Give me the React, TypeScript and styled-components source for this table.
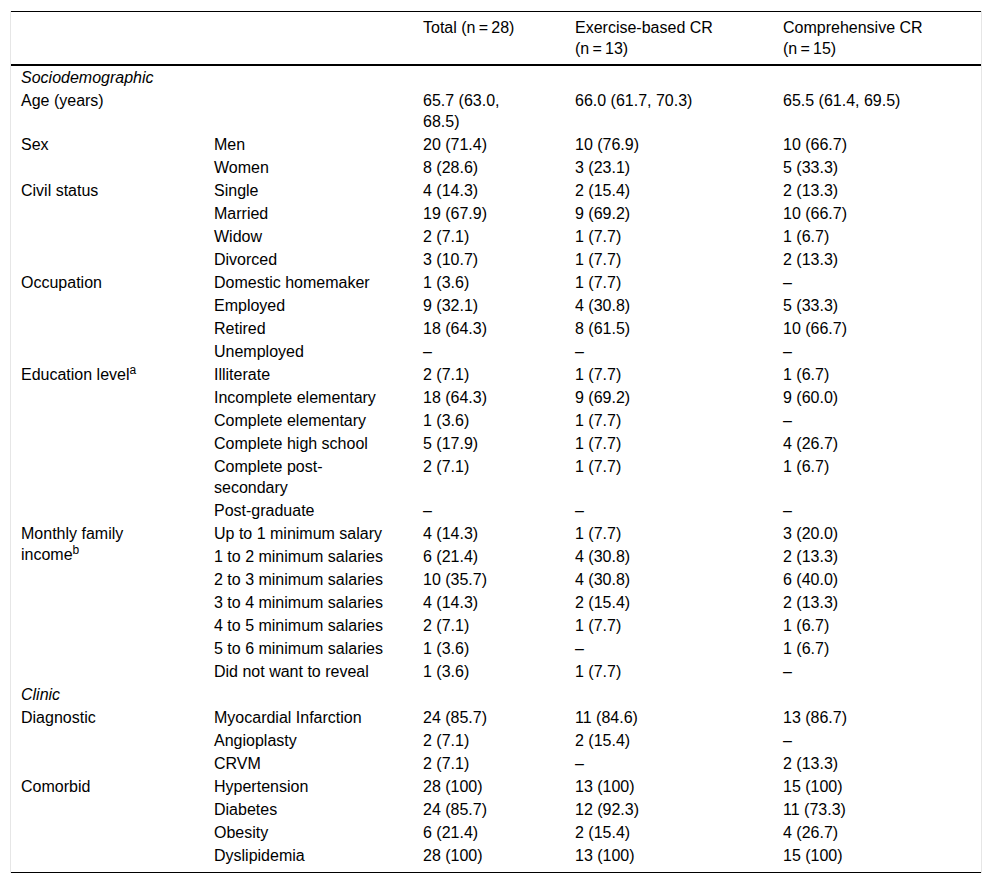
import styled, { createGlobalStyle } from 'styled-components';

const GlobalStyle = createGlobalStyle`
    body {
        margin: 0;
        background: #ffffff;
        font-family: "Liberation Sans", Arial, sans-serif;
        color: #000000;
    }
`
const TableFrame = styled.div`
    margin: 11px 0 0 10px;
    width: 970px;
    border-left: 1px solid #e6e6e6;
    border-right: 1px solid #e6e6e6;
`
const DataTable = styled.table`
    width: 970px;
    table-layout: fixed;
    border-collapse: collapse;
    font-size: 16px;
    line-height: 21px;
    border-top: 1px solid #000;
    border-bottom: 1px solid #000;
`
const HeadCell = styled.th`
    text-align: left;
    font-weight: 400;
    vertical-align: top;
    padding: 5px 28px 5px 10px;
    border-bottom: 2px solid #000;
`
const Cell = styled.td<{ $last?: boolean }>`
    vertical-align: top;
    padding: 1px 28px ${p => (p.$last ? '6px' : '1px')} 10px;
`
const SectionCell = styled.td`
    font-style: italic;
    padding: 1px 10px;
`
const Sup = styled.sup`
    font-size: 12px;
    line-height: 0;
    vertical-align: 6px;
`
const NoWrap = styled.span`
    white-space: nowrap;
`

type Item = [string, string, string, string]
type Group = { label: string; note?: string; items: Item[] }

const sections: { title: string; groups: Group[] }[] = [
    {
        title: 'Sociodemographic',
        groups: [
            { label: 'Age (years)', items: [['', '65.7 (63.0, 68.5)', '66.0 (61.7, 70.3)', '65.5 (61.4, 69.5)']] },
            {
                label: 'Sex',
                items: [
                    ['Men', '20 (71.4)', '10 (76.9)', '10 (66.7)'],
                    ['Women', '8 (28.6)', '3 (23.1)', '5 (33.3)'],
                ],
            },
            {
                label: 'Civil status',
                items: [
                    ['Single', '4 (14.3)', '2 (15.4)', '2 (13.3)'],
                    ['Married', '19 (67.9)', '9 (69.2)', '10 (66.7)'],
                    ['Widow', '2 (7.1)', '1 (7.7)', '1 (6.7)'],
                    ['Divorced', '3 (10.7)', '1 (7.7)', '2 (13.3)'],
                ],
            },
            {
                label: 'Occupation',
                items: [
                    ['Domestic homemaker', '1 (3.6)', '1 (7.7)', '–'],
                    ['Employed', '9 (32.1)', '4 (30.8)', '5 (33.3)'],
                    ['Retired', '18 (64.3)', '8 (61.5)', '10 (66.7)'],
                    ['Unemployed', '–', '–', '–'],
                ],
            },
            {
                label: 'Education level',
                note: 'a',
                items: [
                    ['Illiterate', '2 (7.1)', '1 (7.7)', '1 (6.7)'],
                    ['Incomplete elementary', '18 (64.3)', '9 (69.2)', '9 (60.0)'],
                    ['Complete elementary', '1 (3.6)', '1 (7.7)', '–'],
                    ['Complete high school', '5 (17.9)', '1 (7.7)', '4 (26.7)'],
                    ['Complete post-secondary', '2 (7.1)', '1 (7.7)', '1 (6.7)'],
                    ['Post-graduate', '–', '–', '–'],
                ],
            },
            {
                label: 'Monthly family income',
                note: 'b',
                items: [
                    ['Up to 1 minimum salary', '4 (14.3)', '1 (7.7)', '3 (20.0)'],
                    ['1 to 2 minimum salaries', '6 (21.4)', '4 (30.8)', '2 (13.3)'],
                    ['2 to 3 minimum salaries', '10 (35.7)', '4 (30.8)', '6 (40.0)'],
                    ['3 to 4 minimum salaries', '4 (14.3)', '2 (15.4)', '2 (13.3)'],
                    ['4 to 5 minimum salaries', '2 (7.1)', '1 (7.7)', '1 (6.7)'],
                    ['5 to 6 minimum salaries', '1 (3.6)', '–', '1 (6.7)'],
                    ['Did not want to reveal', '1 (3.6)', '1 (7.7)', '–'],
                ],
            },
        ],
    },
    {
        title: 'Clinic',
        groups: [
            {
                label: 'Diagnostic',
                items: [
                    ['Myocardial Infarction', '24 (85.7)', '11 (84.6)', '13 (86.7)'],
                    ['Angioplasty', '2 (7.1)', '2 (15.4)', '–'],
                    ['CRVM', '2 (7.1)', '–', '2 (13.3)'],
                ],
            },
            {
                label: 'Comorbid',
                items: [
                    ['Hypertension', '28 (100)', '13 (100)', '15 (100)'],
                    ['Diabetes', '24 (85.7)', '12 (92.3)', '11 (73.3)'],
                    ['Obesity', '6 (21.4)', '2 (15.4)', '4 (26.7)'],
                    ['Dyslipidemia', '28 (100)', '13 (100)', '15 (100)'],
                ],
            },
        ],
    },
]

const Count = ({ n }: { n: number }) => <NoWrap>(n{'\u2009'}={'\u2009'}{n})</NoWrap>

const App = () => {
    return (
        <>
            <GlobalStyle />
            <TableFrame>
                <DataTable>
                    <colgroup>
                        <col style={{ width: 193 }} />
                        <col style={{ width: 209 }} />
                        <col style={{ width: 152 }} />
                        <col style={{ width: 208 }} />
                        <col style={{ width: 208 }} />
                    </colgroup>
                    <thead>
                        <tr>
                            <HeadCell />
                            <HeadCell />
                            <HeadCell>Total <Count n={28} /></HeadCell>
                            <HeadCell>Exercise-based CR <Count n={13} /></HeadCell>
                            <HeadCell>Comprehensive CR <Count n={15} /></HeadCell>
                        </tr>
                    </thead>
                    {sections.map((section, si) => (
                        <tbody key={section.title}>
                            <tr>
                                <SectionCell colSpan={5}>{section.title}</SectionCell>
                            </tr>
                            {section.groups.map((group, gi) =>
                                group.items.map((item, ii) => {
                                    const last =
                                        si === sections.length - 1 &&
                                        gi === section.groups.length - 1 &&
                                        ii === group.items.length - 1
                                    return (
                                        <tr key={group.label + ii}>
                                            {ii === 0 && (
                                                <Cell rowSpan={group.items.length} $last={group.items.length === 1 && last}>
                                                    {group.label}
                                                    {group.note && <Sup>{group.note}</Sup>}
                                                </Cell>
                                            )}
                                            <Cell $last={last}>{item[0]}</Cell>
                                            <Cell $last={last}>{item[1]}</Cell>
                                            <Cell $last={last}>{item[2]}</Cell>
                                            <Cell $last={last}>{item[3]}</Cell>
                                        </tr>
                                    )
                                })
                            )}
                        </tbody>
                    ))}
                </DataTable>
            </TableFrame>
        </>
    )
}

export default App;
